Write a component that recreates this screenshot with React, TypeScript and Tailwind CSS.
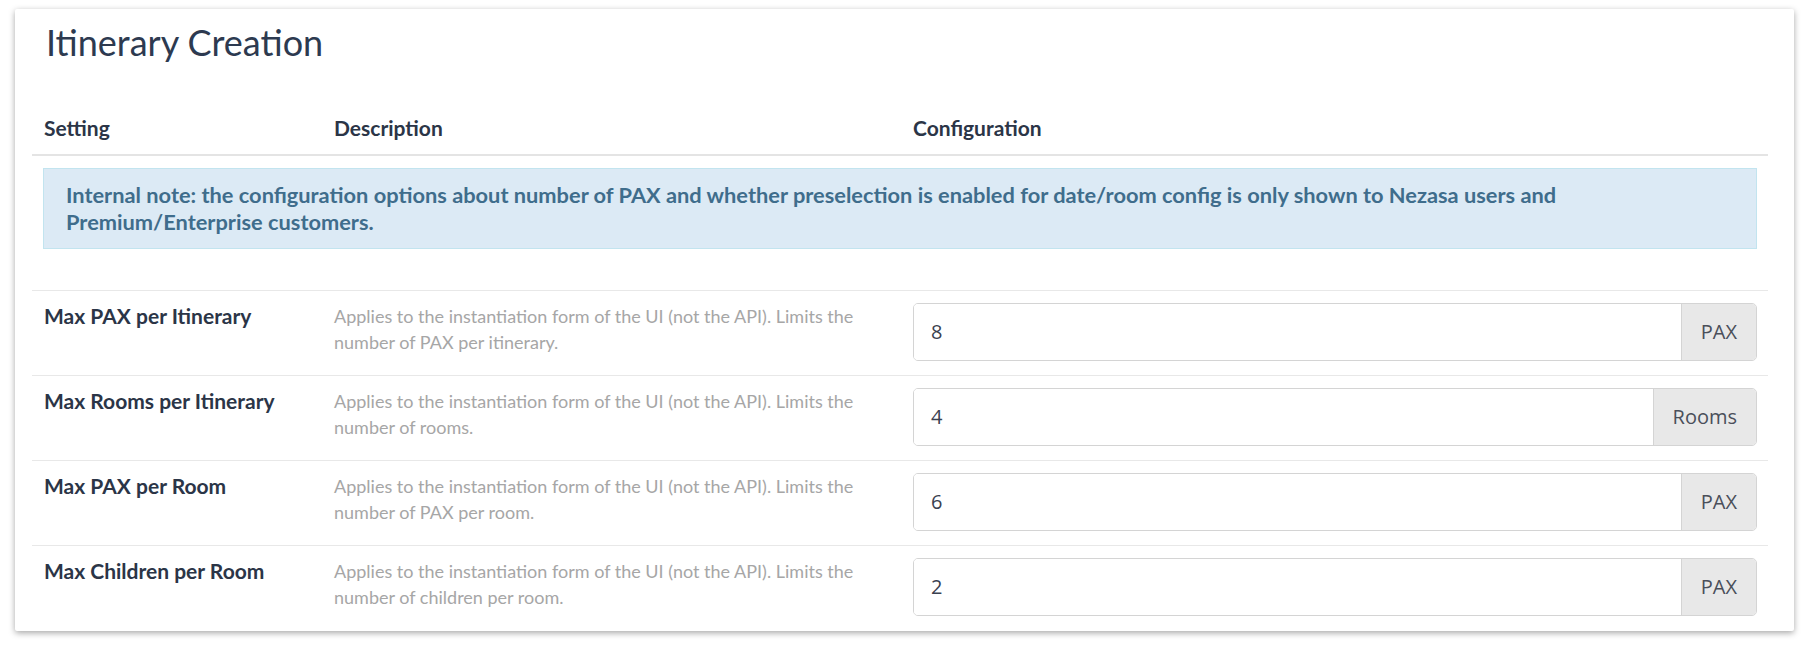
import React from 'react';

const rows = [
  { label: 'Max PAX per Itinerary', desc: 'number of PAX per itinerary.', value: '8', unit: 'PAX' },
  { label: 'Max Rooms per Itinerary', desc: 'number of rooms.', value: '4', unit: 'Rooms' },
  { label: 'Max PAX per Room', desc: 'number of PAX per room.', value: '6', unit: 'PAX' },
  { label: 'Max Children per Room', desc: 'number of children per room.', value: '2', unit: 'PAX' },
];

export default function App() {
  return (
    <div className="min-h-screen bg-white pt-[9px] pl-[15px] font-['Lato',sans-serif] text-[#2b3547]">
      <div className="w-[1779px] h-[622px] bg-white rounded-[2px] shadow-[0_2px_6px_rgba(0,0,0,0.35)]">
        {/* Title */}
        <h2 className="pl-[31px] pt-[11px] text-[36px] leading-[44px] font-normal text-[#2d3a50]">
          Itinerary Creation
        </h2>

        <div className="ml-[17px] w-[1736px]">
          {/* Header */}
          <div className="mt-[38px] grid grid-cols-[290px_579px_1fr] h-[54px] items-center border-b-2 border-[#e4e4e4] text-[21px] font-bold">
            <div className="pl-3">Setting</div>
            <div className="pl-3">Description</div>
            <div className="pl-3">Configuration</div>
          </div>

          {/* Internal note */}
          <div className="pt-[12px] pb-[41px] px-[11px]">
            <div className="bg-[#dceaf5] border border-[#c2e4ef] pl-[22px] pr-[40px] pt-[12px] pb-[13px] text-[21.8px] leading-[27px] font-bold text-[#3f6d8c]">
              Internal note: the configuration options about number of PAX and whether preselection is enabled for date/room config is only shown to Nezasa users and Premium/Enterprise customers.
            </div>
          </div>

          {/* Settings rows */}
          {rows.map((r) => (
            <div key={r.label} className="grid grid-cols-[290px_579px_1fr] h-[85px] border-t border-[#e8e8e8]">
              <div className="pl-3 pt-[12px] text-[21px] leading-[26px] font-bold">{r.label}</div>
              <div className="pl-3 pt-[12px] text-[18px] leading-[26px] text-[#a6a6a6]">
                Applies to the instantiation form of the UI (not the API). Limits the
                <br />
                {r.desc}
              </div>
              <div className="pl-3 pr-[11px] pt-[12px]">
                <div className="flex h-[58px] rounded-[5px] border border-[#d4d4d4] overflow-hidden font-['Open_Sans',sans-serif] text-[20px] text-[#3a4150]">
                  <div className="flex-1 flex items-center pl-[17px] bg-white">{r.value}</div>
                  <div className="flex items-center px-[19px] bg-[#e8e8e8] border-l border-[#d4d4d4] text-[#4a4f5a]">
                    {r.unit}
                  </div>
                </div>
              </div>
            </div>
          ))}
        </div>
      </div>
    </div>
  );
}
